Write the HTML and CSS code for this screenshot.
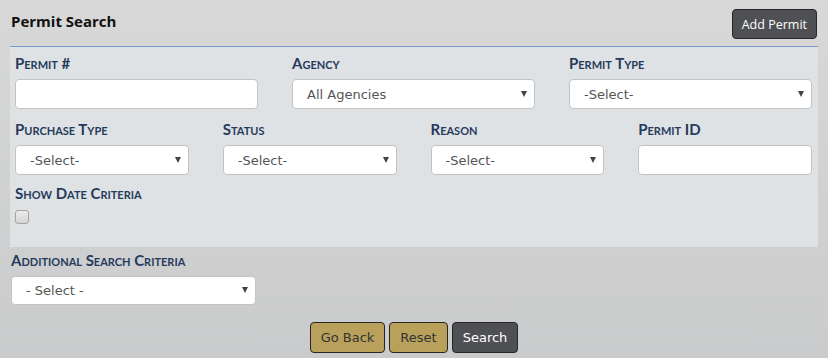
FILE: index.html
```html
<!DOCTYPE html>
<html lang="en">
<head>
    <meta charset="UTF-8">
    <title>Permit Search</title>
    <link rel="stylesheet" href="styles.css">
</head>
<body>
    <div class="page">

        <div class="header">
            <h1 class="title">Permit Search</h1>
            <button class="btn btnDark addBtn">Add Permit</button>
        </div>

        <div class="panel">

            <div class="row rowThree">
                <div class="field">
                    <label>Permit #</label>
                    <input type="text" class="box">
                </div>
                <div class="field">
                    <label>Agency</label>
                    <div class="selectWrap">
                        <select class="box"><option>All Agencies</option></select>
                    </div>
                </div>
                <div class="field">
                    <label>Permit Type</label>
                    <div class="selectWrap">
                        <select class="box"><option>-Select-</option></select>
                    </div>
                </div>
            </div>

            <div class="row rowFour">
                <div class="field">
                    <label>Purchase Type</label>
                    <div class="selectWrap">
                        <select class="box"><option>-Select-</option></select>
                    </div>
                </div>
                <div class="field">
                    <label>Status</label>
                    <div class="selectWrap">
                        <select class="box"><option>-Select-</option></select>
                    </div>
                </div>
                <div class="field">
                    <label>Reason</label>
                    <div class="selectWrap">
                        <select class="box"><option>-Select-</option></select>
                    </div>
                </div>
                <div class="field">
                    <label>Permit ID</label>
                    <input type="text" class="box">
                </div>
            </div>

            <div class="dateRow">
                <label>Show Date Criteria</label>
                <input type="checkbox" class="check">
            </div>

        </div>

        <div class="extra">
            <label>Additional Search Criteria</label>
            <div class="selectWrap extraSelect">
                <select class="box"><option>- Select -</option></select>
            </div>
        </div>

        <div class="actions">
            <button class="btn btnGold">Go Back</button>
            <button class="btn btnGold">Reset</button>
            <button class="btn btnDark">Search</button>
        </div>

    </div>
</body>
</html>
```

FILE: styles.css
```css
* {
    box-sizing: border-box;
}

html, body {
    height: 100%;
}

body {
    margin: 0;
    background: linear-gradient(#d8d8d8, #cacbcc);
    font-family: "DejaVu Sans", Verdana, sans-serif;
}

.page {
    padding: 0 10px;
}

.header {
    display: flex;
    justify-content: space-between;
    align-items: flex-start;
    height: 46px;
}

.title {
    margin: 11px 0 0 1px;
    font-family: "Open Sans", sans-serif;
    font-size: 15px;
    line-height: 20px;
    font-weight: bold;
    color: #111;
}

/* search panel */
.panel {
    background-color: #dfe2e5;
    border-top: 1px solid #7f9ad0;
    padding: 7px 6px 23px 5px;
}

.row {
    display: grid;
    column-gap: 34px;
    margin-bottom: 11px;
}

.rowThree {
    grid-template-columns: repeat(3, 1fr);
}

.rowFour {
    grid-template-columns: repeat(4, 1fr);
    margin-bottom: 9px;
}

.field {
    display: flex;
    flex-direction: column;
}

label {
    display: block;
    font-family: Lato, sans-serif;
    font-variant: small-caps;
    font-weight: bold;
    font-size: 15px;
    line-height: 18px;
    color: #263a5c;
    margin-bottom: 7px;
}

.box {
    width: 100%;
    height: 30px;
    margin: 0;
    border: 1px solid #c3c3c3;
    border-radius: 4px;
    background-color: #fff;
    font-family: "DejaVu Sans", Verdana, sans-serif;
    font-size: 13px;
    color: #555;
    outline: none;
}

select.box {
    -webkit-appearance: none;
    appearance: none;
    padding: 0 24px 0 14px;
}

.selectWrap {
    position: relative;
}

/* little dropdown arrow */
.selectWrap:after {
    content: "";
    position: absolute;
    right: 8px;
    top: 12px;
    border-left: 3px solid transparent;
    border-right: 3px solid transparent;
    border-top: 6px solid #444;
    pointer-events: none;
}

.dateRow label {
    margin-bottom: 8px;
}

.check {
    -webkit-appearance: none;
    appearance: none;
    display: block;
    width: 14px;
    height: 14px;
    margin: 1px 0 0;
    border: 1px solid #a4a4a4;
    border-radius: 3px;
    background: linear-gradient(#ececec, #d4d4d4);
}

/* below the panel */
.extra {
    margin-top: 4px;
    padding-left: 1px;
}

.extraSelect {
    width: 245px;
}

.extraSelect .box {
    height: 29px;
}

.extraSelect:after {
    top: 11px;
}

.actions {
    display: flex;
    justify-content: center;
    gap: 4px;
    margin-top: 17px;
}

.btn {
    height: 31px;
    padding: 0 10px;
    border: 1px solid #262626;
    border-radius: 4px;
    font-family: "DejaVu Sans", Verdana, sans-serif;
    font-size: 13px;
    cursor: pointer;
}

.btnGold {
    background-color: #b9a15c;
    color: #333;
}

.btnDark {
    background-color: #4f5054;
    color: #fff;
}

.addBtn {
    margin-top: 9px;
    margin-right: 1px;
    height: 30px;
    padding: 0 9px;
    white-space: nowrap;
    font-family: "Open Sans", sans-serif;
    font-size: 12.5px;
}
```
